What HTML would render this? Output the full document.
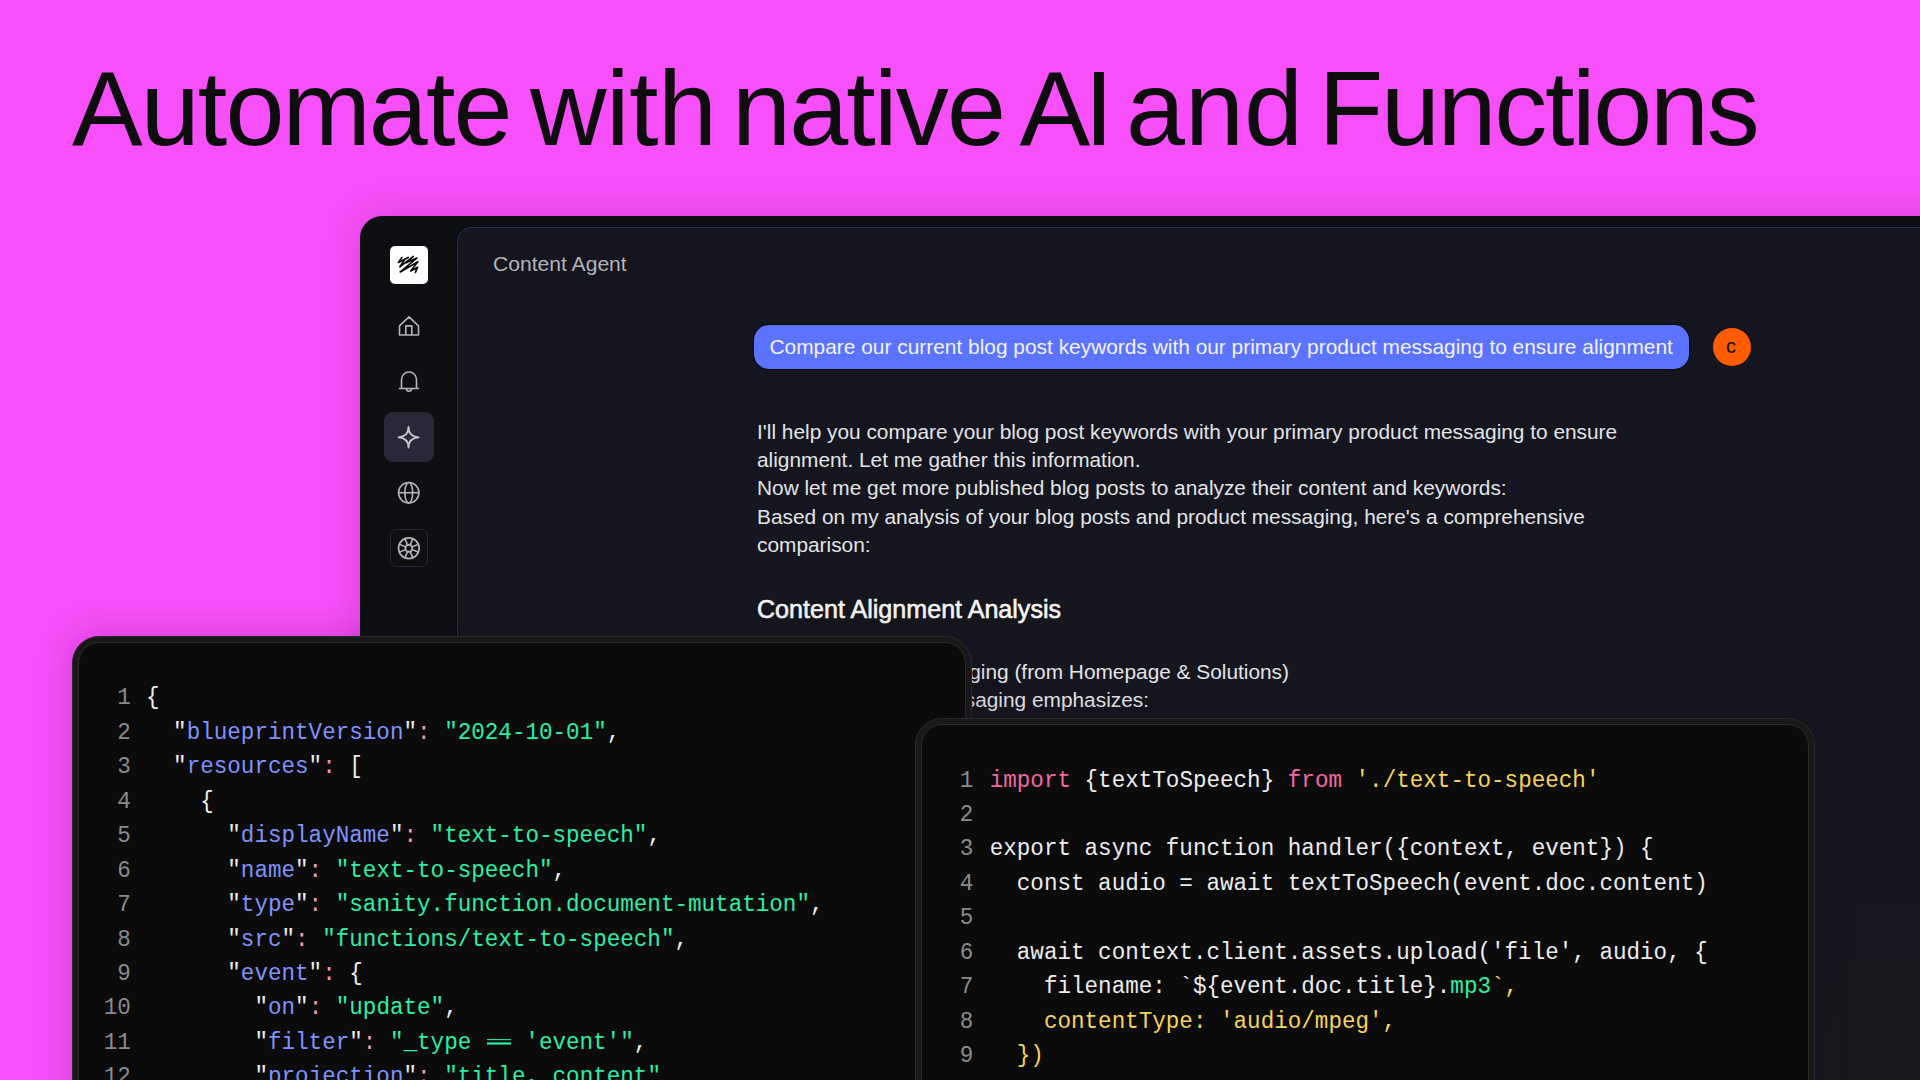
<!DOCTYPE html>
<html><head><meta charset="utf-8">
<style>
*{margin:0;padding:0;box-sizing:border-box}
html,body{width:1920px;height:1080px;overflow:hidden}
body{background:#f74ff9;font-family:"Liberation Sans",sans-serif;position:relative}
.abs{position:absolute}
.title{position:absolute;top:53px;font-size:106px;line-height:110px;color:#0d0d0d;white-space:nowrap}
.app{position:absolute;left:360px;top:216px;width:1600px;height:900px;background:#0e0f13;border-radius:22px;box-shadow:0 0 36px rgba(70,0,70,.16)}
.inner{position:absolute;left:457px;top:227px;width:1500px;height:900px;background:linear-gradient(180deg,#14151e 0%,#15161e 50%,#17181d 100%);border:1px solid #26305c;box-shadow:0 0 0 1px rgba(0,0,0,.45);border-radius:14px}
.logo{position:absolute;left:390px;top:246px;width:38px;height:38px;background:#fff;border-radius:5px}
.ico{position:absolute;overflow:visible}
.act{position:absolute;left:384px;top:412px;width:50px;height:50px;background:#2a2838;border-radius:9px}
.ringbox{position:absolute;left:390px;top:529px;width:38px;height:38px;border:1px solid #28263a;border-radius:6px}
.ca{position:absolute;left:493px;top:252px;font-size:21.1px;color:#b4b4b8;white-space:nowrap}
.bubble{position:absolute;left:754px;top:325px;width:935px;height:44px;background:#5b73fe;border-radius:15px;color:#f2f2f7;font-size:20.9px;line-height:44px;padding-left:15.5px;white-space:nowrap;box-shadow:0 0 0 1px rgba(0,0,0,.5)}
.avatar{position:absolute;left:1713px;top:328px;width:38px;height:38px;border-radius:50%;background:#ff5b00;color:#111;font-size:20px;text-align:center;line-height:36px;text-indent:-2px}
.resp{position:absolute;left:757px;top:417.5px;font-size:20.85px;line-height:28.45px;color:#e3e3e6;white-space:nowrap}
.h3{position:absolute;left:757px;top:594.6px;font-size:25.1px;line-height:normal;font-weight:normal;-webkit-text-stroke:0.6px #f4f4f4;color:#f4f4f4;white-space:nowrap}
.resp2{position:absolute;font-size:20.85px;line-height:28.45px;color:#e3e3e6;white-space:nowrap;text-align:right}
.code{position:absolute;background:#181818;border:1px solid #2a2a2a;border-radius:27px;box-shadow:0 0 36px rgba(40,0,40,.2)}
.code .in{position:absolute;left:5px;top:5px;right:5px;bottom:5px;background:#0b0b0b;border:1px solid #2c2c2c;border-radius:21px}
.c1{left:72px;top:636px;width:900px;height:520px}
.c2{left:915px;top:718px;width:900px;height:480px}
.ln,.cl{position:absolute;font-family:"Liberation Mono",monospace;font-size:22.58px;line-height:34.45px;white-space:pre;height:34.45px;transform:scaleY(1.1);transform-origin:0 23.2px}
.ln{color:#8a8a8a;width:27px;text-align:right}
.w{color:#ececec}.b{color:#7f93fb}.p{color:#f49ab8}.g{color:#2cefa5}.y{color:#f5d35c}
.c2w .p{color:#f06aa0}
.lig{display:inline-block;width:27px;height:0;position:relative}
.lig::before{content:'';position:absolute;left:2.2px;right:0.8px;bottom:4.2px;height:2.3px;border-top:1.8px solid #2cefa5;border-bottom:2px solid #2cefa5}

</style></head><body>
<div class="title" style="left:72px;letter-spacing:-1.9px">Automate</div><div class="title" style="left:530px;letter-spacing:-0.5px">with</div><div class="title" style="left:732px;letter-spacing:-1.8px">native</div><div class="title" style="left:1019.5px;letter-spacing:-5.9px">AI</div><div class="title" style="left:1126px;letter-spacing:0px">and</div><div class="title" style="left:1318.5px;letter-spacing:-2.3px">Functions</div>
<div class="app"></div>
<div class="inner"></div>
<div class="logo"></div>
<svg class="ico" style="left:390px;top:246px" width="38" height="38" viewBox="0 0 38 38"><path d="M11.9,11.4 L8.4,16.4 L18.2,11.4 M15.0,13.1 L9.9,20.8 L23.3,10.4 L16.2,16.8 L26.8,12.1 L10.3,25.9 L27.8,15.7 L20.7,24.9 L27.6,21.2 L25.4,26.3" fill="none" stroke="#0a0a0a" stroke-width="1.7" stroke-linecap="round" stroke-linejoin="round"/></svg>
<svg class="ico" style="left:396px;top:313px" width="26" height="26" viewBox="0 0 26 26"><path d="M3.5,22 V12.8 L13,3.8 L22.5,12.8 V22 Z M9.8,22 V12.9 H15.8 V22" fill="none" stroke="#b4b4b8" stroke-width="1.6" stroke-linejoin="round"/></svg>
<svg class="ico" style="left:396px;top:369px" width="26" height="26" viewBox="0 0 26 26"><path d="M5.5,19.3 V10.5 A7.5,7.5 0 0 1 20.5,10.5 V19.3 M3.5,19.5 H22.5 M10.5,19.8 A2.5,2.5 0 0 0 15.5,19.8" fill="none" stroke="#b4b4b8" stroke-width="1.6" stroke-linejoin="round" stroke-linecap="round"/></svg>
<div class="act"></div>
<svg class="ico" style="left:396px;top:425px" width="26" height="26" viewBox="0 0 26 26"><path d="M12.5,2 Q12.5,11.5 2.5,12.3 Q12.5,13 12.5,22.5 Q12.5,13 22.5,12.3 Q12.5,11.5 12.5,2 Z" fill="none" stroke="#c8c8cc" stroke-width="1.8" stroke-linejoin="round"/></svg>
<svg class="ico" style="left:396px;top:480px" width="26" height="26" viewBox="0 0 26 26"><circle cx="12.75" cy="12.75" r="10.2" fill="none" stroke="#b4b4b8" stroke-width="1.6"/><ellipse cx="12.75" cy="12.75" rx="3.9" ry="10.2" fill="none" stroke="#b4b4b8" stroke-width="1.6"/><path d="M2.5,12.75 H23" stroke="#b4b4b8" stroke-width="1.6"/></svg>
<div class="ringbox"></div>
<svg class="ico" style="left:396px;top:535px" width="26" height="26" viewBox="0 0 26 26"><circle cx="12.85" cy="13.25" r="10.3" fill="none" stroke="#b4b4b8" stroke-width="1.7"/><circle cx="12.85" cy="13.25" r="3.5" fill="none" stroke="#b4b4b8" stroke-width="1.9"/><g stroke="#b4b4b8" stroke-width="1.6"><path d="M12.85,13.25 m1.38,-3.33 l2.6,-6.3"/><path d="M12.85,13.25 m-1.38,-3.33 l-2.6,-6.3"/><path d="M12.85,13.25 m1.38,3.33 l2.6,6.3"/><path d="M12.85,13.25 m-1.38,3.33 l-2.6,6.3"/><path d="M12.85,13.25 m3.33,-1.38 l6.3,-2.6"/><path d="M12.85,13.25 m-3.33,-1.38 l-6.3,-2.6"/><path d="M12.85,13.25 m3.33,1.38 l6.3,2.6"/><path d="M12.85,13.25 m-3.33,1.38 l-6.3,2.6"/></g></svg>
<div class="ca">Content Agent</div>
<div class="bubble">Compare our current blog post keywords with our primary product messaging to ensure alignment</div>
<div class="avatar">c</div>
<div class="resp">I'll help you compare your blog post keywords with your primary product messaging to ensure<br>alignment. Let me gather this information.<br>Now let me get more published blog posts to analyze their content and keywords:<br>Based on my analysis of your blog posts and product messaging, here's a comprehensive<br>comparison:</div>
<div class="h3">Content Alignment Analysis</div>
<div class="resp2" style="right:631px;top:657.5px">Primary Product Messaging (from Homepage &amp; Solutions)</div><div class="resp2" style="right:771px;top:686px">Our product messaging emphasizes:</div>
<div class="code c1"><div class="in"></div></div>
<div class="ln" style="top:681.40px;left:103.70px">1</div>
<div class="cl" style="top:681.40px;left:146px"><span class="w">{</span></div>
<div class="ln" style="top:715.85px;left:103.70px">2</div>
<div class="cl" style="top:715.85px;left:146px"><span class="w">  "</span><span class="b">blueprintVersion</span><span class="w">"</span><span class="p">:</span><span class="w"> </span><span class="g">"2024-10-01"</span><span class="w">,</span></div>
<div class="ln" style="top:750.30px;left:103.70px">3</div>
<div class="cl" style="top:750.30px;left:146px"><span class="w">  "</span><span class="b">resources</span><span class="w">"</span><span class="p">:</span><span class="w"> </span><span class="w">[</span></div>
<div class="ln" style="top:784.75px;left:103.70px">4</div>
<div class="cl" style="top:784.75px;left:146px"><span class="w">    {</span></div>
<div class="ln" style="top:819.20px;left:103.70px">5</div>
<div class="cl" style="top:819.20px;left:146px"><span class="w">      "</span><span class="b">displayName</span><span class="w">"</span><span class="p">:</span><span class="w"> </span><span class="g">"text-to-speech"</span><span class="w">,</span></div>
<div class="ln" style="top:853.65px;left:103.70px">6</div>
<div class="cl" style="top:853.65px;left:146px"><span class="w">      "</span><span class="b">name</span><span class="w">"</span><span class="p">:</span><span class="w"> </span><span class="g">"text-to-speech"</span><span class="w">,</span></div>
<div class="ln" style="top:888.10px;left:103.70px">7</div>
<div class="cl" style="top:888.10px;left:146px"><span class="w">      "</span><span class="b">type</span><span class="w">"</span><span class="p">:</span><span class="w"> </span><span class="g">"sanity.function.document-mutation"</span><span class="w">,</span></div>
<div class="ln" style="top:922.55px;left:103.70px">8</div>
<div class="cl" style="top:922.55px;left:146px"><span class="w">      "</span><span class="b">src</span><span class="w">"</span><span class="p">:</span><span class="w"> </span><span class="g">"functions/text-to-speech"</span><span class="w">,</span></div>
<div class="ln" style="top:957.00px;left:103.70px">9</div>
<div class="cl" style="top:957.00px;left:146px"><span class="w">      "</span><span class="b">event</span><span class="w">"</span><span class="p">:</span><span class="w"> </span><span class="w">{</span></div>
<div class="ln" style="top:991.45px;left:103.70px">10</div>
<div class="cl" style="top:991.45px;left:146px"><span class="w">        "</span><span class="b">on</span><span class="w">"</span><span class="p">:</span><span class="w"> </span><span class="g">"update"</span><span class="w">,</span></div>
<div class="ln" style="top:1025.90px;left:103.70px">11</div>
<div class="cl" style="top:1025.90px;left:146px"><span class="w">        "</span><span class="b">filter</span><span class="w">"</span><span class="p">:</span><span class="w"> </span><span class="g">"_type </span><span class="lig"></span><span class="g"> 'event'"</span><span class="w">,</span></div>
<div class="ln" style="top:1060.35px;left:103.70px">12</div>
<div class="cl" style="top:1060.35px;left:146px"><span class="w">        "</span><span class="b">projection</span><span class="w">"</span><span class="p">:</span><span class="w"> </span><span class="g">"title, content"</span></div>
<div class="code c2"><div class="in"></div></div>
<div class="c2w">
<div class="ln" style="top:763.50px;left:946.30px">1</div>
<div class="cl" style="top:763.50px;left:989.7px"><span class="p">import</span><span class="w"> {textToSpeech} </span><span class="p">from</span><span class="w"> </span><span class="y">'./text-to-speech'</span></div>
<div class="ln" style="top:797.95px;left:946.30px">2</div>
<div class="cl" style="top:797.95px;left:989.7px"></div>
<div class="ln" style="top:832.40px;left:946.30px">3</div>
<div class="cl" style="top:832.40px;left:989.7px"><span class="w">export async function handler({context, event}) {</span></div>
<div class="ln" style="top:866.85px;left:946.30px">4</div>
<div class="cl" style="top:866.85px;left:989.7px"><span class="w">  const audio = await textToSpeech(event.doc.content)</span></div>
<div class="ln" style="top:901.30px;left:946.30px">5</div>
<div class="cl" style="top:901.30px;left:989.7px"></div>
<div class="ln" style="top:935.75px;left:946.30px">6</div>
<div class="cl" style="top:935.75px;left:989.7px"><span class="w">  await context.client.assets.upload('file', audio, {</span></div>
<div class="ln" style="top:970.20px;left:946.30px">7</div>
<div class="cl" style="top:970.20px;left:989.7px"><span class="w">    filename: `${event.doc.title}.</span><span class="g">mp3</span><span class="y">`,</span></div>
<div class="ln" style="top:1004.65px;left:946.30px">8</div>
<div class="cl" style="top:1004.65px;left:989.7px"><span class="y">    contentType: 'audio/mpeg',</span></div>
<div class="ln" style="top:1039.10px;left:946.30px">9</div>
<div class="cl" style="top:1039.10px;left:989.7px"><span class="y">  })</span></div>
</div>

</body></html>
